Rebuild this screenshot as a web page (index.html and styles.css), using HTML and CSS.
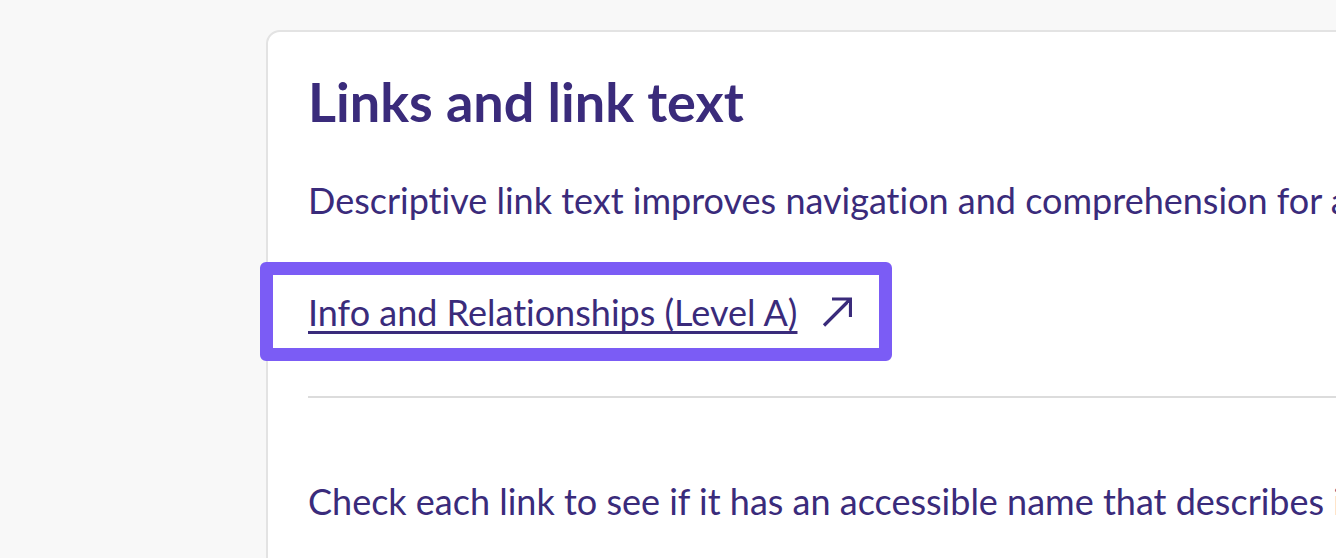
FILE: index.html
```html
<!DOCTYPE html>
<html lang="en">
<head>
<meta charset="utf-8">
<title>Links and link text</title>
<link rel="stylesheet" href="styles.css">
</head>
<body>
<main class="page">
  <section class="card">
    <h2 class="title">Links and link text</h2>
    <p class="text">Descriptive link text improves navigation and comprehension for all users.</p>
    <div class="link-row">
      <a class="ext-link" href="#">
        <span class="ext-label">Info and Relationships (Level A)</span>
        <svg class="ext-icon" viewBox="0 0 30 30" width="30" height="30" aria-hidden="true">
          <path d="M2 28.5 L28 2.5 M10 2 H28.5 V20" fill="none" stroke="currentColor" stroke-width="3.2" stroke-linecap="butt" stroke-linejoin="miter"/>
        </svg>
      </a>
    </div>
    <hr class="divider">
    <p class="text check">Check each link to see if it has an accessible name that describes its purpose.</p>
  </section>
</main>
</body>
</html>
```
FILE: styles.css
```css
html, body {
  margin: 0;
  padding: 0;
  height: 100%;
  overflow: hidden;
  background: #f8f8f8;
}

body {
  font-family: Lato, "Noto Sans", sans-serif;
  color: #3a2b7b;
  font-variant-ligatures: none;
}

.page {
  padding: 30px 0 0 266px;
  overflow: hidden;
}

.card {
  width: 1300px;
  min-height: 600px;
  background: #ffffff;
  border: 2px solid #e3e3e3;
  border-radius: 14px;
  padding: 38px 40px 0 40px;
  box-sizing: border-box;
}

.title {
  margin: 0;
  font-size: 54px;
  font-weight: 700;
  line-height: 1.2;
  color: #3a2b7b;
}

.text {
  margin: 38px 0 0;
  font-size: 36px;
  line-height: 1.5;
  white-space: nowrap;
}

.link-row {
  margin-top: 35px;
  margin-left: -48px;
}

.ext-link {
  display: inline-flex;
  align-items: center;
  gap: 25px;
  padding: 10px 27px 9px 35px;
  border: 13px solid #7b5cf5;
  border-radius: 6px;
  color: #3a2b7b;
  text-decoration: none;
  font-size: 36px;
  line-height: 1.5;
}

.ext-label {
  text-decoration: underline;
  text-decoration-thickness: 3px;
  text-underline-offset: 5px;
  text-decoration-skip-ink: none;
}

.ext-icon {
  width: 30px;
  height: 30px;
  flex: none;
}

.divider {
  margin: 35px 0 0;
  border: 0;
  border-top: 2px solid #dcdcdc;
  height: 0;
}

.check {
  margin-top: 76px;
}
```
